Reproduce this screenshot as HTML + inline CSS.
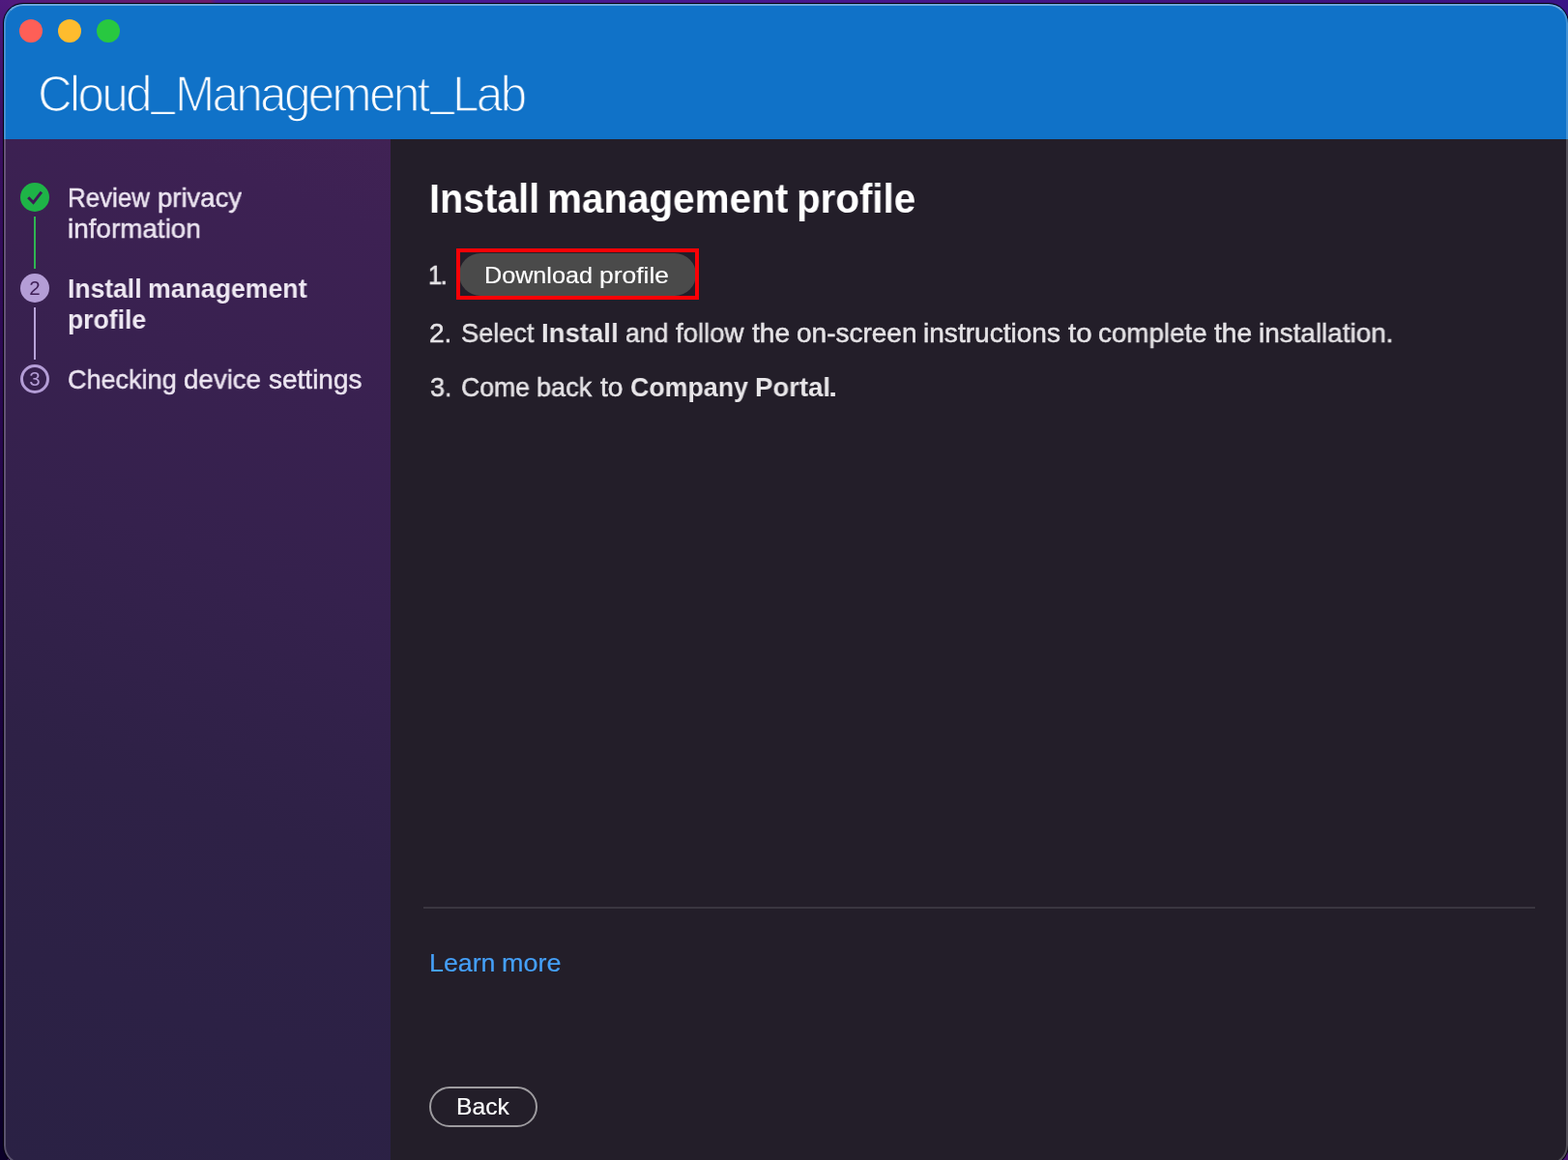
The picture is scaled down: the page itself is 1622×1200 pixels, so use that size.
<!DOCTYPE html>
<html lang="en">
<head>
<meta charset="utf-8">
<title>Cloud_Management_Lab</title>
<style>
*{box-sizing:border-box;margin:0;padding:0}
html,body{width:1622px;height:1200px;overflow:hidden}
body{font-family:"Liberation Sans",sans-serif;position:relative;background:#3a1466}
.bg{position:absolute;left:0;top:0;width:1622px;height:1200px;background:linear-gradient(90deg,#4f1a7e 0%,#5e1a72 6%,#6a1a6a 13.4%,#4a1a92 13.8%,#46178c 55%,#40127c 80%,#3a1487 100%)}
.bgl{position:absolute;left:0;top:0;width:8px;height:1200px;background:linear-gradient(180deg,#4f1a7e 0%,#3a1060 11%,#200545 50%,#0b0028 100%)}
.bgr{position:absolute;right:0;top:0;width:4px;height:1200px;background:linear-gradient(180deg,#3a1487 0%,#2a2a60 40%,#3a1a5a 80%,#4a1470 100%)}
.win{position:absolute;left:4px;top:4px;width:1618px;height:1201px;border-radius:20px;overflow:hidden;box-shadow:0 0 0 1px #05000c;background:#231e29}
.win::after{content:"";position:absolute;left:0;top:0;right:0;bottom:0;border-radius:20px;border:2px solid rgba(255,255,255,.22);border-top-color:rgba(255,255,255,.38);pointer-events:none}
.hdr{position:absolute;left:0;top:0;width:100%;height:140px;background:#1072c8}
.tl{position:absolute;top:16px;width:24px;height:24px;border-radius:50%}
.tl.r{left:16px;background:#fe5f57}
.tl.y{left:56px;background:#febc2e}
.tl.g{left:96px;background:#28c840}
.side{position:absolute;left:0;top:140px;width:400px;bottom:0;background:linear-gradient(200deg,#402254 0%,#3d2153 8%,#35214d 41%,#2e2146 63%,#2a2144 100%)}
.main{position:absolute;left:400px;top:140px;right:0;bottom:0;background:#231e29}
/* every text run is absolutely positioned relative to the window */
.t{position:absolute;white-space:nowrap;line-height:1;transform-origin:0 50%;will-change:transform}
.title{font-size:52px;color:#fff;letter-spacing:-2.8px;-webkit-text-stroke:1.5px #1072c8}
.tu{font-size:45px;color:#fff;transform-origin:0 0;transform:scale(0.935,0.72)}
.s{font-size:28px;color:#ece5f1;-webkit-text-stroke:.5px #ece5f1}
.sb{font-size:28px;font-weight:bold;color:#efe9f3}
.h1{font-size:43px;font-weight:bold;color:#fff}
.p{font-size:28px;color:#e5e3e6;-webkit-text-stroke:.5px #e5e3e6}
.pb{font-size:28px;font-weight:bold;color:#e8e6e9}
.lk{font-size:26px;color:#45a0f8;-webkit-text-stroke:.2px #45a0f8}
.dot{position:absolute;left:17px;width:30px;height:30px;border-radius:50%}
.num{position:absolute;left:17px;width:30px;text-align:center;font-size:20.5px;line-height:30px;will-change:transform}
.conn{position:absolute;left:31px;width:2px}
.hl{position:absolute;left:468px;top:253px;width:251px;height:53px;border:4px solid #fb0006}
.dl{position:absolute;display:block;left:471px;top:257.5px;width:245px;height:44px;border-radius:22px;background:#4a4a4a}
.rule{position:absolute;left:434px;top:934px;width:1150px;height:2px;background:#3a3640}
.back{position:absolute;left:440px;top:1120px;width:112px;height:42px;border-radius:21px;border:2px solid #9d9b9f}
ol,ul{list-style:none}
h1,h2{font-weight:normal;font-size:inherit}
a{text-decoration:none}
.w{display:contents;font:inherit;color:inherit}
hr{border:0}
</style>
</head>
<body>
<div class="bg"></div><div class="bgl"></div><div class="bgr"></div>
<div class="win">
  <header class="hdr">
    <span class="tl r"></span><span class="tl y"></span><span class="tl g"></span>
  </header>
  <div class="side"></div>
  <div class="main"></div>

  <h1><span class="t title" id="ti1" style="left:34.81px;top:67px;transform:scaleX(0.9507)">Cloud</span><span class="t tu" id="tu1" style="left:153.3px;top:80px">_</span><span class="t title" id="ti2" style="left:176.75px;top:67px;transform:scaleX(0.9496)">Management</span><span class="t tu" id="tu2" style="left:441.5px;top:80px">_</span><span class="t title" id="ti3" style="left:464.41px;top:67px;transform:scaleX(0.9512)">Lab</span></h1>

  <nav>
    <ol>
      <li>
        <span class="dot" style="top:185px;background:#1eb447"></span>
        <svg style="position:absolute;left:17px;top:185px" width="30" height="30" viewBox="0 0 30 30"><path d="M8.2 15.3 L13.5 20.6 L21.9 9.7" fill="none" stroke="#3d1d55" stroke-width="3"/></svg>
        <span class="conn" style="top:220px;height:54px;background:#2fb552"></span>
        <span class="t s" id="s1a1" style="left:65.95px;top:187px;transform:scaleX(0.9255)">Review</span> <span class="t s" id="s1a2" style="left:158.94px;top:187px;transform:scaleX(0.9812)">privacy</span>
        <span class="t s" id="s1b" style="left:66.38px;top:219px;transform:scaleX(0.9948)">information</span>
      </li>
      <li>
        <span class="dot" style="top:279px;background:#b49dd6"></span>
        <span class="num" id="n2" style="top:279px;color:#3d1d55">2</span>
        <span class="conn" style="top:314px;height:54px;background:#b8a4d9"></span>
        <b class="t sb" id="s2a1" style="left:65.73px;top:281px;transform:scaleX(0.9462)">Install</b> <b class="t sb" id="s2a2" style="left:149.05px;top:281px;transform:scaleX(0.9518)">management</b>
        <b class="t sb" id="s2b" style="left:65.85px;top:313px;transform:scaleX(0.948)">profile</b>
      </li>
      <li>
        <span class="dot" style="top:373px;border:3px solid #b49dd6"></span>
        <span class="num" id="n3" style="top:373px;color:#b49dd6">3</span>
        <span class="t s" id="s3a" style="left:66.28px;top:375px;transform:scaleX(0.9651)">Checking</span> <span class="t s" id="s3b" style="left:186.26px;top:375px;transform:scaleX(0.9882)">device</span> <span class="t s" id="s3c" style="left:274.19px;top:375px;transform:scaleX(0.9989)">settings</span>
      </li>
    </ol>
  </nav>

  <main>
    <h2><span class="t h1" id="h1a" style="left:440.24px;top:180px;transform:scaleX(0.9191)">Install</span> <span class="t h1" id="h1b" style="left:562.19px;top:180px;transform:scaleX(0.9393)">management</span> <span class="t h1" id="h1c" style="left:819.53px;top:180px;transform:scaleX(0.9373)">profile</span></h2>
    <ol>
      <li>
        <span class="t p" id="l1n" style="left:439.01px;top:267px;transform:scaleX(0.9051);letter-spacing:-1.6px;-webkit-text-stroke:.7px #e5e3e6">1.</span>
        <button type="button" class="w"><span class="dl"></span><span class="t p" id="dlt1" style="left:496.74px;top:269px;color:#fff;-webkit-text-stroke:.15px #fff;font-size:24px;transform:scaleX(1.0486)">Download</span> <span class="t p" id="dlt2" style="left:615.62px;top:269px;color:#fff;-webkit-text-stroke:.15px #fff;font-size:24px;transform:scaleX(1.1007)">profile</span></button>
        <span class="hl"></span>
      </li>
      <li>
        <span class="t p" id="l2n" style="left:440.3px;top:327px;transform:scaleX(0.9898)">2.</span>
        <span class="t p" id="l2a" style="left:472.52px;top:327px;transform:scaleX(0.9691)">Select</span>
        <b class="t pb" id="l2b" style="left:556.03px;top:327px;transform:scaleX(0.9835)">Install</b>
        <span class="t p" id="l2c1" style="left:643.1px;top:327px;transform:scaleX(0.9473)">and</span>
        <span class="t p" id="l2c2" style="left:695.34px;top:327px;transform:scaleX(0.9847)">follow</span>
        <span class="t p" id="l2c3" style="left:774.04px;top:327px;transform:scaleX(1.0035)">the</span>
        <span class="t p" id="l2c4" style="left:819.98px;top:327px;transform:scaleX(1.0)">on-screen</span>
        <span class="t p" id="l2c5" style="left:951.47px;top:327px;transform:scaleX(1.0026)">instructions</span>
        <span class="t p" id="l2c6" style="left:1100.89px;top:327px;transform:scaleX(1.0526)">to</span>
        <span class="t p" id="l2c7" style="left:1132.26px;top:327px;transform:scaleX(0.991)">complete</span>
        <span class="t p" id="l2c8" style="left:1252.18px;top:327px;transform:scaleX(1.0035)">the</span>
        <span class="t p" id="l2c9" style="left:1298.03px;top:327px;transform:scaleX(0.9953)">installation.</span>
      </li>
      <li>
        <span class="t p" id="l3n" style="left:440.53px;top:383px;transform:scaleX(0.9633)">3.</span>
        <span class="t p" id="l3a1" style="left:472.76px;top:383px;transform:scaleX(0.9512)">Come</span> <span class="t p" id="l3a2" style="left:551.22px;top:383px;transform:scaleX(0.9653)">back</span> <span class="t p" id="l3a3" style="left:616.5px;top:383px;transform:scaleX(1.0082)">to</span>
        <b class="t pb" id="l3b1" style="left:648.19px;top:383px;transform:scaleX(0.9556)">Company</b> <b class="t pb" id="l3b2" style="left:776.55px;top:383px;transform:scaleX(0.983)">Portal</b><span class="t p" id="l3c" style="left:851.2px;top:376px;transform:scaleX(1.3223);font-size:36px;-webkit-text-stroke:0">.</span>
      </li>
    </ol>
    <hr class="rule">
    <a class="w"><span class="t lk" id="lk1" style="left:439.61px;top:979px;transform:scaleX(1.029)">Learn</span> <span class="t lk" id="lk2" style="left:515.19px;top:979px;transform:scaleX(1.0361)">more</span></a>
    <button type="button" class="w"><span class="back"></span><span class="t p" id="bk" style="left:467.7px;top:1129px;color:#fff;-webkit-text-stroke:.15px #fff;font-size:24px;transform:scaleX(1.0267)">Back</span></button>
  </main>
</div>
</body>
</html>
